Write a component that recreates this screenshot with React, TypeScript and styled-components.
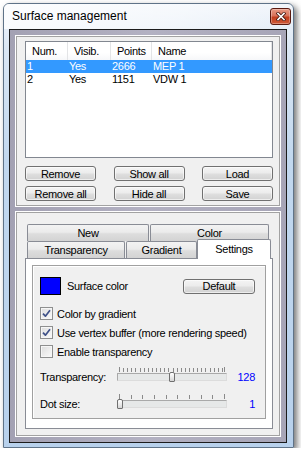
import React from "react";
import styled, { createGlobalStyle } from "styled-components";

const GlobalStyle = createGlobalStyle`
    html, body {
        margin: 0;
        padding: 0;
        background: #ffffff;
    }
    body {
        font-family: "Liberation Sans", Arial, sans-serif;
        font-size: 11px;
        letter-spacing: -0.3px;
        color: #000;
    }
    * {
        box-sizing: border-box;
    }
`;

const Window = styled.div`
    width: 291px;
    height: 445px;
    margin: 3px 0 0 3px;
    border: 1px solid #5f7388;
    border-radius: 6px 6px 0 0;
    background: linear-gradient(180deg, #f2f6fb 0%, #dbe7f4 10%, #c2d8ef 35%, #b8d1ec 100%);
    box-shadow: 3px 3px 6px rgba(0, 0, 0, 0.55);
    display: flex;
    flex-direction: column;
    padding-bottom: 4px;
`;

const TitleBar = styled.div`
    height: 25px;
    flex: none;
    display: flex;
    align-items: flex-start;
    justify-content: space-between;
    padding: 0 2px 0 8px;
    border-radius: 5px 5px 0 0;
    background: linear-gradient(90deg, rgba(255, 255, 255, 0.8) 0%, rgba(255, 255, 255, 0.45) 60%, rgba(255, 255, 255, 0) 100%);
`;

const Title = styled.span`
    margin-top: 5px;
    font-size: 12px;
    letter-spacing: 0;
    line-height: 14px;
    color: #000;
`;

const CloseButton = styled.div`
    width: 21px;
    height: 17px;
    margin-top: 4px;
    border: 1px solid #5a1a10;
    border-radius: 3px;
    background: linear-gradient(180deg, #e89a85 0%, #d8725a 45%, #c23e1e 55%, #cf5a38 100%);
    box-shadow: inset 0 0 0 1px rgba(255, 255, 255, 0.3);
    display: flex;
    align-items: center;
    justify-content: center;
`;

const ClientFrame = styled.div`
    height: 414px;
    margin: 0 6px 0 5px;
    border: 1px solid #1c1c1c;
    background: linear-gradient(90deg, #a3a1b3 0%, #b3b1c2 50%, #a7a5b7 100%);
    padding: 5px;
    display: flex;
    flex-direction: column;
    gap: 4px;
`;

const Panel = styled.div<{ $tall?: boolean }>`
    border: 1px solid #ffffff;
    box-shadow: inset 0 0 0 1px #a2a2a2;
    background: #f0f0f0;
    display: flex;
    flex-direction: column;
    padding: ${(p) => (p.$tall ? "12px 7px 7px 9px" : "5px 7px 4px 9px")};
    ${(p) => (p.$tall ? "flex: 1;" : "height: 172px; flex: none;")}
`;

const ListView = styled.div`
    height: 117px;
    border: 1px solid #828790;
    background: #ffffff;
`;

const columns = "42px 43px 41px 1fr";

const HeaderRow = styled.div`
    display: grid;
    grid-template-columns: ${columns};
    height: 18px;
    background: linear-gradient(180deg, #ffffff 0%, #ffffff 60%, #f6f7f9 100%);
`;

const HeaderCell = styled.div`
    display: flex;
    align-items: center;
    padding-left: 6px;
    border-right: 1px solid #e3e4e6;
`;

const ListRow = styled.div<{ $selected?: boolean }>`
    display: grid;
    grid-template-columns: ${columns};
    height: 13px;
    line-height: 13px;
    background: ${(p) => (p.$selected ? "#3399ff" : "transparent")};
    color: ${(p) => (p.$selected ? "#ffffff" : "#000000")};
`;

const ListCell = styled.div`
    padding-left: 1px;
    white-space: nowrap;
`;

const ButtonGrid = styled.div`
    display: grid;
    grid-template-columns: repeat(3, 71px);
    justify-content: space-between;
    row-gap: 5px;
    margin-top: 8px;
`;

const PushButton = styled.button<{ $w?: number }>`
    width: ${(p) => (p.$w ? `${p.$w}px` : "auto")};
    height: 15px;
    padding: 0;
    border: 1px solid #707070;
    border-radius: 3px;
    background: linear-gradient(180deg, #f4f4f4 0%, #ececec 45%, #dedede 55%, #d2d2d2 100%);
    box-shadow: inset 0 0 0 1px rgba(255, 255, 255, 0.6);
    font-family: inherit;
    font-size: 11px;
    letter-spacing: -0.3px;
    line-height: 12px;
    color: #000;
`;

const TabRow = styled.div`
    display: flex;
    gap: 1px;
    height: 17px;
    padding-left: 2px;
    align-items: flex-end;
    flex: none;
`;

const Tab = styled.div<{ $w: number; $active?: boolean }>`
    width: ${(p) => p.$w}px;
    height: ${(p) => (p.$active ? 20 : 17)}px;
    margin-bottom: ${(p) => (p.$active ? -1 : 0)}px;
    margin-left: ${(p) => (p.$active ? -1 : 0)}px;
    position: relative;
    z-index: ${(p) => (p.$active ? 2 : 0)};
    border: 1px solid #898c95;
    border-bottom: none;
    border-radius: 2px 2px 0 0;
    background: ${(p) =>
        p.$active ? "#ffffff" : "linear-gradient(180deg, #f3f3f3 0%, #ebebeb 45%, #dddddd 55%, #d3d3d3 100%)"};
    display: flex;
    align-items: ${(p) => (p.$active ? "flex-start" : "center")};
    padding-top: ${(p) => (p.$active ? 3 : 0)}px;
    justify-content: center;
`;

const TabContent = styled.div`
    flex: 1;
    border: 1px solid #898c95;
    background: #ffffff;
    padding: 6px 6px 9px 6px;
    display: flex;
`;

const Group = styled.div`
    flex: 1;
    border: 1px solid #a0a0a0;
    box-shadow: inset 1px 1px 0 #ffffff;
    background: #f0f0f0;
    padding: 11px 10px 0 7px;
    display: flex;
    flex-direction: column;
`;

const ColorRow = styled.div`
    display: flex;
    align-items: center;
    height: 18px;
`;

const Swatch = styled.div<{ $color: string }>`
    width: 21px;
    height: 18px;
    border: 1px solid #000;
    background: ${(p) => p.$color};
`;

const SwatchLabel = styled.span`
    margin-left: 6px;
    flex: 1;
`;

const CheckRow = styled.label<{ $first?: boolean }>`
    display: flex;
    align-items: center;
    height: 13px;
    margin-top: ${(p) => (p.$first ? 12 : 6)}px;
`;

const CheckBox = styled.span`
    width: 13px;
    height: 13px;
    border: 1px solid #8e8f8f;
    background: linear-gradient(135deg, #dcdcdc 0%, #ececec 50%, #fafafa 100%);
    box-shadow: inset 0 0 0 1px #f6f6f6;
    display: flex;
    align-items: center;
    justify-content: center;
`;

const CheckText = styled.span`
    margin-left: 4px;
`;

const SliderRow = styled.div<{ $first?: boolean }>`
    display: flex;
    align-items: flex-end;
    margin-top: ${(p) => (p.$first ? 9 : 12)}px;
`;

const SliderLabel = styled.span`
    width: 77px;
    height: 10px;
    line-height: 10px;
`;

const SliderBox = styled.div`
    width: 110px;
    display: flex;
    flex-direction: column;
`;

const TrackWrap = styled.div`
    position: relative;
    height: 10px;
`;

const Track = styled.div`
    margin-top: 1px;
    height: 8px;
    border: 1px solid;
    border-color: #a9a9a9 #dcdcdc #dcdcdc #a9a9a9;
    background: #e6e8e8;
`;

const Thumb = styled.div`
    position: absolute;
    top: 0;
    width: 6px;
    height: 10px;
    border: 1px solid #707070;
    border-radius: 2px 2px 1px 1px;
    background: linear-gradient(180deg, #ffffff 0%, #e8e8e8 60%, #d4d4d4 100%);
`;

const SliderValue = styled.span`
    flex: 1;
    height: 10px;
    line-height: 10px;
    text-align: right;
    color: #0000ff;
`;

const surfaces = [
    { num: 1, visible: "Yes", points: 2666, name: "MEP 1" },
    { num: 2, visible: "Yes", points: 1151, name: "VDW 1" },
];

const Check = () => (
    <svg width="11" height="11" viewBox="0 0 11 11">
        <path d="M2 5.6 L4.4 8.2 L9 2.2" fill="none" stroke="#3f5188" strokeWidth="1.7" strokeLinejoin="round" />
    </svg>
);

const Ticks = ({ min, max, step }: { min: number; max: number; step: number }) => {
    const marks: number[] = [];
    for (let v = min; v <= max; v += step) marks.push(v);
    if (marks[marks.length - 1] !== max) marks.push(max);
    return (
        <svg width="110" height="5" viewBox="0 0 110 5" style={{ display: "block" }}>
            {marks.map((v, i) => {
                const x = Math.round(2 + ((v - min) / (max - min)) * 105) + 0.5;
                const end = i === 0 || i === marks.length - 1;
                return <line key={v} x1={x} x2={x} y1={end ? 0 : 1} y2={5} stroke="#8a8a8a" strokeWidth="1" />;
            })}
        </svg>
    );
};

const Slider = ({ min, max, step, value }: { min: number; max: number; step: number; value: number }) => (
    <SliderBox>
        <Ticks min={min} max={max} step={step} />
        <TrackWrap>
            <Track />
            <Thumb style={{ left: Math.round(((value - min) / (max - min)) * 104) }} />
        </TrackWrap>
    </SliderBox>
);

const App = () => {
    return (
        <>
            <GlobalStyle />
            <Window>
                <TitleBar>
                    <Title>Surface management</Title>
                    <CloseButton>
                        <svg width="10" height="9" viewBox="0 0 10 9">
                            <path d="M2 1.5 L8 7.5 M8 1.5 L2 7.5" stroke="#4a1a12" strokeWidth="3.2" strokeLinecap="square" />
                            <path d="M2 1.5 L8 7.5 M8 1.5 L2 7.5" stroke="#ffffff" strokeWidth="1.6" strokeLinecap="square" />
                        </svg>
                    </CloseButton>
                </TitleBar>
                <ClientFrame>
                    <Panel>
                        <ListView>
                            <HeaderRow>
                                <HeaderCell>Num.</HeaderCell>
                                <HeaderCell>Visib.</HeaderCell>
                                <HeaderCell>Points</HeaderCell>
                                <HeaderCell>Name</HeaderCell>
                            </HeaderRow>
                            {surfaces.map((s, i) => (
                                <ListRow key={s.num} $selected={i === 0}>
                                    <ListCell>{s.num}</ListCell>
                                    <ListCell>{s.visible}</ListCell>
                                    <ListCell>{s.points}</ListCell>
                                    <ListCell>{s.name}</ListCell>
                                </ListRow>
                            ))}
                        </ListView>
                        <ButtonGrid>
                            <PushButton>Remove</PushButton>
                            <PushButton>Show all</PushButton>
                            <PushButton>Load</PushButton>
                            <PushButton>Remove all</PushButton>
                            <PushButton>Hide all</PushButton>
                            <PushButton>Save</PushButton>
                        </ButtonGrid>
                    </Panel>
                    <Panel $tall>
                        <TabRow>
                            <Tab $w={122}>New</Tab>
                            <Tab $w={119}>Color</Tab>
                        </TabRow>
                        <TabRow>
                            <Tab $w={98}>Transparency</Tab>
                            <Tab $w={71}>Gradient</Tab>
                            <Tab $w={74} $active>
                                Settings
                            </Tab>
                        </TabRow>
                        <TabContent>
                            <Group>
                                <ColorRow>
                                    <Swatch $color="#0000ff" />
                                    <SwatchLabel>Surface color</SwatchLabel>
                                    <PushButton $w={72}>Default</PushButton>
                                </ColorRow>
                                <CheckRow $first>
                                    <CheckBox>
                                        <Check />
                                    </CheckBox>
                                    <CheckText>Color by gradient</CheckText>
                                </CheckRow>
                                <CheckRow>
                                    <CheckBox>
                                        <Check />
                                    </CheckBox>
                                    <CheckText>Use vertex buffer (more rendering speed)</CheckText>
                                </CheckRow>
                                <CheckRow>
                                    <CheckBox />
                                    <CheckText>Enable transparency</CheckText>
                                </CheckRow>
                                <SliderRow $first>
                                    <SliderLabel>Transparency:</SliderLabel>
                                    <Slider min={0} max={255} step={10} value={128} />
                                    <SliderValue>128</SliderValue>
                                </SliderRow>
                                <SliderRow>
                                    <SliderLabel>Dot size:</SliderLabel>
                                    <Slider min={1} max={10} step={1} value={1} />
                                    <SliderValue>1</SliderValue>
                                </SliderRow>
                            </Group>
                        </TabContent>
                    </Panel>
                </ClientFrame>
            </Window>
        </>
    );
};

export default App;
